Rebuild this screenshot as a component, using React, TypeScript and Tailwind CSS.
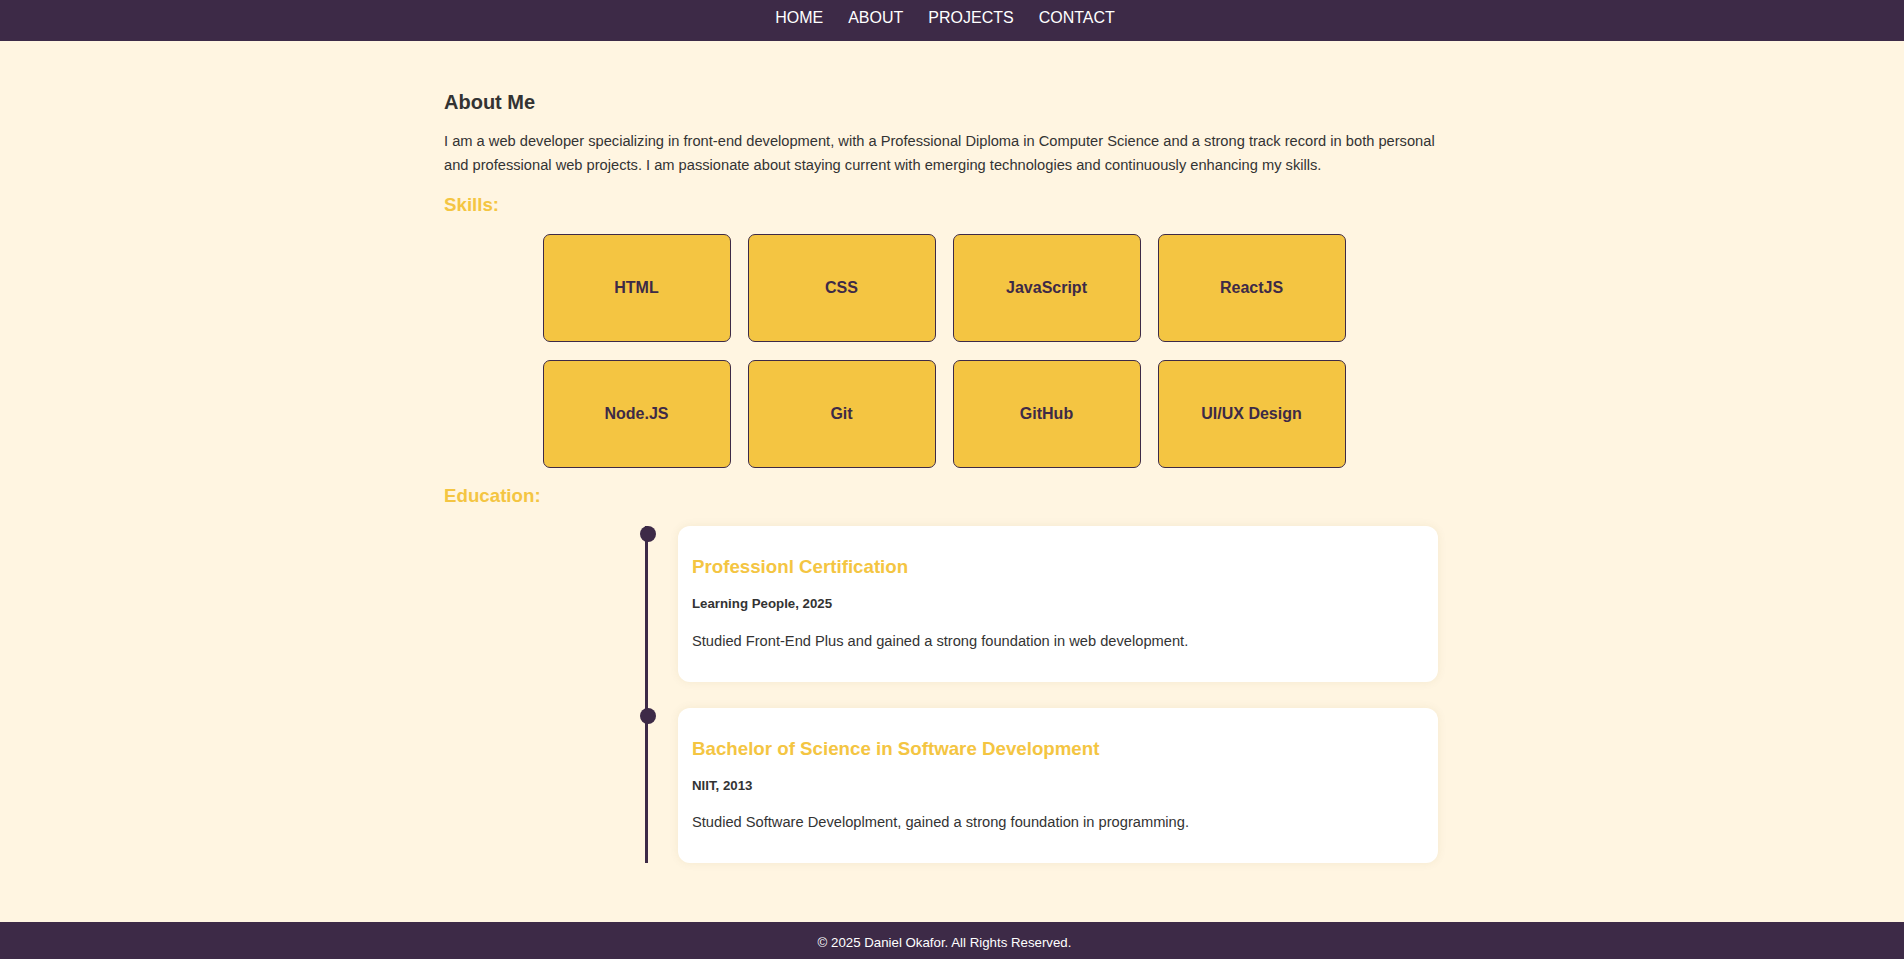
const skills = ["HTML", "CSS", "JavaScript", "ReactJS", "Node.JS", "Git", "GitHub", "UI/UX Design"];

const education = [
  {
    title: "Professionl Certification",
    school: "Learning People, 2025",
    text: "Studied Front-End Plus and gained a strong foundation in web development.",
  },
  {
    title: "Bachelor of Science in Software Development",
    school: "NIIT, 2013",
    text: "Studied Software Developlment, gained a strong foundation in programming.",
  },
];

function Nav() {
  return (
    <nav className="h-[41px] bg-[#3d2a47]">
      <ul className="flex justify-center gap-[25px] pr-[14px] pt-[8px] text-[16px] leading-[20px] text-white">
        <li><a href="#home">HOME</a></li>
        <li><a href="#about">ABOUT</a></li>
        <li><a href="#projects">PROJECTS</a></li>
        <li><a href="#contact">CONTACT</a></li>
      </ul>
    </nav>
  );
}

function SkillCard({ name }: { name: string }) {
  return (
    <div className="flex h-[108px] w-[188px] items-center justify-center rounded-[7px] border border-[#3d2a47] bg-[#f4c542] text-[16px] font-bold text-[#3d2a47]">
      {name}
    </div>
  );
}

function EduCard({ title, school, text }: { title: string; school: string; text: string }) {
  return (
    <div className="relative rounded-[12px] bg-white px-[14px] pt-[30px] pb-[32px] shadow-[0_0_10px_rgba(120,90,30,0.08)]">
      <span className="absolute top-0 left-[-38px] h-[16px] w-[16px] rounded-full bg-[#3d2a47]" />
      <h3 className="text-[18.72px] leading-[22px] font-bold text-[#f4c542]">{title}</h3>
      <h5 className="mt-[18px] text-[13.28px] leading-[16px] font-bold text-[#333]">{school}</h5>
      <p className="mt-[19.5px] text-[14.67px] leading-[18px] text-[#333]">{text}</p>
    </div>
  );
}

export default function App() {
  return (
    <div className="flex min-h-screen flex-col bg-[#fff5e1] font-['Liberation_Sans',Arial,sans-serif] text-[#333]">
      <Nav />
      <main className="flex-1 pr-[22px] pt-[48.5px] pb-[57px]">
        <section className="mx-auto w-[994px]">
          <h2 className="text-[20px] leading-[24px] font-bold">About Me</h2>
          <p className="mt-[15px] text-[14.67px] leading-[24px]">
            I am a web developer specializing in front-end development, with a Professional Diploma in Computer Science and a strong track record in both personal and professional web projects. I am passionate about staying current with emerging technologies and continuously enhancing my skills.
          </p>

          <h3 className="mt-[17px] text-[18.72px] leading-[22px] font-bold text-[#f4c542]">Skills:</h3>
          <div className="mt-[18.5px] flex justify-center pl-[6px]">
            <div className="grid grid-cols-[repeat(4,188px)] gap-x-[17px] gap-y-[18px]">
              {skills.map((s) => (
                <SkillCard key={s} name={s} />
              ))}
            </div>
          </div>

          <h3 className="mt-[17px] text-[18.72px] leading-[22px] font-bold text-[#f4c542]">Education:</h3>
          <div className="mt-[19px] ml-auto flex w-[793px] flex-col gap-[26px] border-l-[3px] border-[#3d2a47] pl-[30px]">
            {education.map((e) => (
              <EduCard key={e.title} {...e} />
            ))}
          </div>
        </section>
      </main>
      <footer className="h-[37px] bg-[#3d2a47] pt-[12.7px] pr-[15px] text-center text-[13.28px] leading-[16px] text-white">
        <p>© 2025 Daniel Okafor. All Rights Reserved.</p>
      </footer>
    </div>
  );
}
